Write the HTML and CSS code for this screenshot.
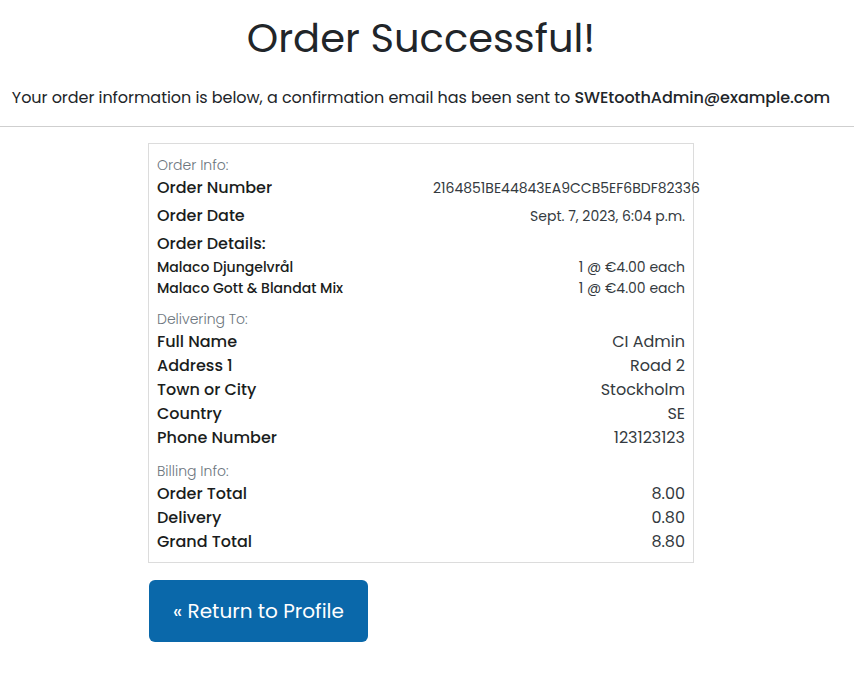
FILE: index.html
```html
<!DOCTYPE html>
<html lang="en">
<head>
<meta charset="utf-8">
<title>Order Successful</title>
<link rel="stylesheet" href="styles.css">
</head>
<body>
<header class="intro">
  <h1 class="title">Order Successful!</h1>
  <p class="subtitle">Your order information is below, a confirmation email has been sent to <strong>SWEtoothAdmin@example.com</strong></p>
</header>
<hr class="divider">
<main class="content">
  <section class="card">
    <div class="group">
      <p class="group-title">Order Info:</p>
      <div class="row spaced"><span class="label">Order Number</span><span class="value small">2164851BE44843EA9CCB5EF6BDF82336</span></div>
      <div class="row spaced"><span class="label">Order Date</span><span class="value small">Sept. 7, 2023, 6:04 p.m.</span></div>
      <div class="row details"><span class="label">Order Details:</span></div>
      <div class="row item"><span class="label">Malaco Djungelvrål</span><span class="value">1 @ €4.00 each</span></div>
      <div class="row item"><span class="label">Malaco Gott &amp; Blandat Mix</span><span class="value">1 @ €4.00 each</span></div>
    </div>
    <div class="group delivery">
      <p class="group-title">Delivering To:</p>
      <div class="row"><span class="label">Full Name</span><span class="value">CI Admin</span></div>
      <div class="row"><span class="label">Address 1</span><span class="value">Road 2</span></div>
      <div class="row"><span class="label">Town or City</span><span class="value">Stockholm</span></div>
      <div class="row"><span class="label">Country</span><span class="value">SE</span></div>
      <div class="row"><span class="label">Phone Number</span><span class="value">123123123</span></div>
    </div>
    <div class="group billing">
      <p class="group-title">Billing Info:</p>
      <div class="row"><span class="label">Order Total</span><span class="value">8.00</span></div>
      <div class="row"><span class="label">Delivery</span><span class="value">0.80</span></div>
      <div class="row"><span class="label">Grand Total</span><span class="value">8.80</span></div>
    </div>
  </section>
  <a class="btn" href="#">« Return to Profile</a>
</main>
</body>
</html>
```

FILE: styles.css
```css
* { box-sizing: border-box; }
body {
  margin: 0;
  font-family: "Poppins", "Open Sans", sans-serif;
  color: #212529;
  background: #fff;
}
.intro {
  text-align: center;
  padding: 14px 12px 0 0;
}
.title {
  margin: 0;
  font-size: 40px;
  line-height: 48px;
  font-weight: 400;
  color: #212529;
}
.subtitle {
  margin: 24px 0 0;
  font-size: 16px;
  line-height: 24px;
  letter-spacing: -0.05px;
}
.subtitle strong { font-weight: 500; }
.divider {
  margin: 16px 0 0;
  border: 0;
  border-top: 1px solid #cfcfcf;
}
.content {
  width: 546px;
  margin: 16px 0 0 148px;
  padding-bottom: 40px;
}
.card {
  border: 1px solid #dcdcdc;
  padding: 10px 8px 8px;
}
.group.delivery { margin-top: 9px; }
.group.billing { margin-top: 10px; }
.group-title {
  margin: 0;
  font-size: 14px;
  line-height: 22px;
  color: #6c757d;
  font-weight: 300;
}
.row {
  display: grid;
  grid-template-columns: 276px 252px;
  align-items: center;
  font-size: 16px;
  line-height: 24px;
}
.row.spaced { margin-bottom: 4px; }
.row.details { margin-bottom: 1px; }
.row.item { font-size: 14px; line-height: 21px; }
.label { font-weight: 500; color: #1a1d20; }
.value { text-align: right; white-space: nowrap; color: #343a40; }
.value.small { font-size: 14px; }
.btn {
  display: inline-block;
  margin-top: 17px;
  margin-left: 1px;
  background: #0a68aa;
  color: #fff;
  font-size: 20px;
  line-height: 30px;
  padding: 16px 24px;
  border-radius: 6px;
  text-decoration: none;
}
```
